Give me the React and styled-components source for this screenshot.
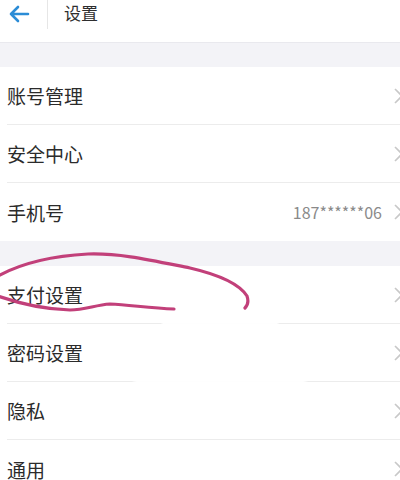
import React from "react";
import styled, { createGlobalStyle } from "styled-components";

const Global = createGlobalStyle`
  html, body { margin: 0; padding: 0; background: #ffffff; }
  body { font-family: "Noto Sans CJK SC", "Noto Sans", sans-serif; overflow: hidden; }
  * { box-sizing: border-box; }
`;

const Page = styled.div`
  position: relative;
  width: 400px;
  height: 480px;
  overflow: hidden;
  background: #ffffff;
`;

const Header = styled.header`
  height: 43px;
  display: flex;
  align-items: flex-start;
  border-bottom: 1px solid #e9e9ee;
  background: #fff;
`;

const BackButton = styled.div`
  width: 48px;
  height: 29px;
  display: flex;
  align-items: center;
  padding-left: 8px;
  padding-bottom: 1px;
  border-right: 1px solid #e6e6e6;
`;

const Title = styled.h1`
  margin: 0;
  padding-left: 16px;
  height: 29px;
  line-height: 26px;
  font-size: 17px;
  font-weight: 400;
  color: #2e2e2e;
`;

const Band = styled.div`
  height: ${(p) => p.$h}px;
  background: #f3f3f7;
`;

const Group = styled.section`
  background: #fff;
`;

const Row = styled.div`
  height: 58px;
  display: flex;
  align-items: center;
  margin-left: 7px;
  border-bottom: ${(p) => (p.$last ? "none" : "1px solid #ececec")};
`;

const Label = styled.span`
  flex: 1;
  font-size: 19px;
  color: #2b2b2b;
`;

const Value = styled.span`
  font-size: 16px;
  color: #8a8a8a;
  margin-right: 12px;
`;

const Chevron = styled.svg`
  width: 10px;
  height: 18px;
  margin-right: -4px;
  flex: none;
`;

const Annotation = styled.svg`
  position: absolute;
  left: 0;
  top: 0;
  width: 400px;
  height: 480px;
  pointer-events: none;
`;

const Arrow = () => (
  <svg width="22" height="18" viewBox="0 0 22 18">
    <path d="M20 9H3M10 2L3 9l7 7" fill="none" stroke="#2b8cd6" strokeWidth="2.6" strokeLinecap="round" strokeLinejoin="round" />
  </svg>
);

const Chev = () => (
  <Chevron viewBox="0 0 10 18">
    <path d="M1 2l7 7-7 7" fill="none" stroke="#c8c8c8" strokeWidth="1.6" />
  </Chevron>
);

const group1 = [
  { label: "账号管理" },
  { label: "安全中心" },
  { label: "手机号", value: "187******06" },
];
const group2 = [
  { label: "支付设置" },
  { label: "密码设置" },
  { label: "隐私" },
  { label: "通用" },
];

const renderRows = (rows) =>
  rows.map((r, i) => (
    <Row key={r.label} $last={i === rows.length - 1}>
      <Label>{r.label}</Label>
      {r.value && <Value>{r.value}</Value>}
      <Chev />
    </Row>
  ));

export default function App() {
  return (
    <>
      <Global />
      <Page>
        <Header>
          <BackButton>
            <Arrow />
          </BackButton>
          <Title>设置</Title>
        </Header>
        <Band $h={24} />
        <Group>{renderRows(group1)}</Group>
        <Band $h={25} />
        <Group>{renderRows(group2)}</Group>
        <Annotation viewBox="0 0 400 480">
          <ellipse cx="220" cy="322" rx="60" ry="6" fill="#fff" opacity="0.95" />
          <ellipse cx="220" cy="380" rx="90" ry="5" fill="#fff" opacity="0.95" />
          <path
            d="M-2 276 C 20 264, 50 256, 88 254 C 120 253, 150 260, 190 268 C 220 275, 240 285, 247 296 C 249 302, 247 306, 245 308"
            fill="none" stroke="#c2407a" strokeWidth="3.2" strokeLinecap="round"
          />
          <path
            d="M-2 296 C 15 302, 40 309, 70 310 C 85 310, 95 305, 110 304 C 130 305, 150 308, 174 309"
            fill="none" stroke="#c2407a" strokeWidth="3.2" strokeLinecap="round"
          />
        </Annotation>
      </Page>
    </>
  );
}
